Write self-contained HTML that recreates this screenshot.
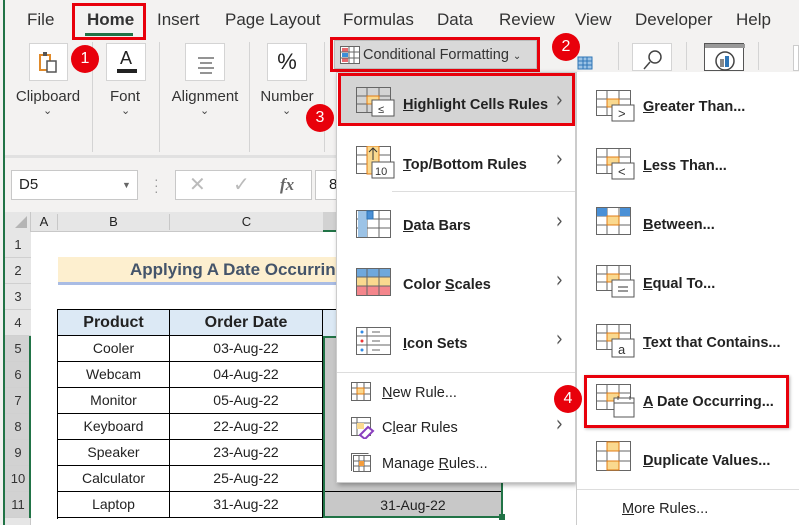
<!DOCTYPE html>
<html><head><meta charset="utf-8"><style>
*{margin:0;padding:0;box-sizing:border-box}
body{width:799px;height:525px;overflow:hidden;position:relative;background:#f3f2f1;font-family:"Liberation Sans",Arial,sans-serif;color:#222}
.a{position:absolute}
.tab{position:absolute;top:10px;font-size:17px;color:#333}
.rb{position:absolute;border:1px solid #d4d4d4;background:#fff}
.lbl{position:absolute;top:88px;font-size:15px;color:#333;text-align:center}
.chev{position:absolute;top:104px;font-size:11px;color:#444}
.sep{position:absolute;top:42px;width:1px;height:110px;background:#d4d4d4}
.circ{position:absolute;width:28px;height:28px;border-radius:50%;background:#e8000b;color:#fff;font-size:16px;text-align:center;line-height:28px}
.rh{position:absolute;left:0;width:31px;height:26px;font-size:13px;color:#333;text-align:center;line-height:26px;border-bottom:1px solid #d0d0d0;background:#e6e6e6}
.cell{position:absolute;border-right:1px solid #000;border-bottom:1px solid #000;text-align:center;font-size:14px;line-height:25px;height:26px}
.m{position:absolute;font-size:14.5px;color:#222}
.mb{font-weight:bold}
.arr{position:absolute;font-size:22px;color:#555;font-family:"DejaVu Sans",sans-serif;transform:scaleX(.8)}
u{text-decoration:underline}
</style></head><body>
<div class="a" style="left:3px;top:0;width:2px;height:525px;background:#217346"></div>
<div class="tab" style="left:27px">File</div>
<div class="tab" style="left:87px;font-weight:bold">Home</div>
<div class="a" style="left:85px;top:33px;width:48px;height:3px;background:#217346"></div>
<div class="a" style="left:72px;top:3px;width:74px;height:37px;border:3px solid #e8000b"></div>
<div class="tab" style="left:157px">Insert</div>
<div class="tab" style="left:225px">Page Layout</div>
<div class="tab" style="left:343px">Formulas</div>
<div class="tab" style="left:437px">Data</div>
<div class="tab" style="left:499px">Review</div>
<div class="tab" style="left:575px">View</div>
<div class="tab" style="left:635px">Developer</div>
<div class="tab" style="left:736px">Help</div>
<div class="rb" style="left:29px;top:43px;width:39px;height:38px"><svg width="39" height="38"><rect x="10" y="11" width="10" height="15" fill="none" stroke="#e08a2a" stroke-width="2"/><rect x="17" y="17" width="9" height="11" fill="#fff" stroke="#555" stroke-width="1.5"/><rect x="13" y="8" width="4" height="4" fill="#555"/></svg></div>
<div class="rb" style="left:106px;top:43px;width:40px;height:38px;text-align:center;font-size:18px;line-height:28px">A<div class="a" style="left:10px;top:25px;width:20px;height:4px;background:#222"></div></div>
<div class="rb" style="left:185px;top:43px;width:40px;height:38px"><svg width="40" height="38"><path d="M12 14h16M14 19h12M12 24h16M14 29h12" stroke="#555" stroke-width="1.3"/></svg></div>
<div class="rb" style="left:267px;top:43px;width:40px;height:38px;text-align:center;font-size:22px;line-height:36px">%</div>
<div class="lbl" style="left:10px;width:76px">Clipboard</div>
<div class="lbl" style="left:100px;width:50px">Font</div>
<div class="lbl" style="left:168px;width:74px">Alignment</div>
<div class="lbl" style="left:258px;width:58px">Number</div>
<div class="chev" style="left:43px">&#8964;</div><div class="chev" style="left:121px">&#8964;</div><div class="chev" style="left:200px">&#8964;</div><div class="chev" style="left:282px">&#8964;</div>
<div class="sep" style="left:92px"></div><div class="sep" style="left:159px"></div><div class="sep" style="left:249px"></div><div class="sep" style="left:324px"></div>
<div class="rb" style="left:576px;top:43px;width:22px;height:28px;border:none;background:none"><svg width="22" height="28"><rect x="2" y="14" width="14" height="12" fill="#9cc3e6" stroke="#2e75b6"/><path d="M2 18h14M2 22h14M7 14v12M11 14v12" stroke="#2e75b6"/></svg></div>
<div class="sep" style="left:618px;height:28px"></div>
<div class="rb" style="left:632px;top:43px;width:40px;height:28px"><svg width="40" height="28"><circle cx="22" cy="13" r="6" fill="none" stroke="#444" stroke-width="1.5"/><path d="M17 18l-6 7" stroke="#444" stroke-width="1.5"/></svg></div>
<div class="sep" style="left:686px;height:28px"></div>
<div class="rb" style="left:704px;top:43px;width:40px;height:28px;border-color:#555"><svg width="40" height="28"><rect x="0" y="0" width="40" height="4" fill="#999"/><circle cx="20" cy="17" r="9" fill="none" stroke="#444" stroke-width="1.5"/><rect x="15" y="15" width="4" height="8" fill="#888"/><rect x="20" y="12" width="4" height="11" fill="#2e75b6"/></svg></div>
<div class="sep" style="left:758px;height:28px"></div>
<div class="a" style="left:793px;top:45px;width:6px;height:26px;border:1px solid #ccc;background:#fff"></div>
<div class="a" style="left:5px;top:155px;width:794px;height:3px;background:#e1e1e1"></div>
<div class="a" style="left:11px;top:170px;width:127px;height:30px;background:#fff;border:1px solid #c8c8c8;font-size:15px;line-height:28px;padding-left:7px">D5<span class="a" style="left:110px;top:0;font-size:9px;color:#666">&#9660;</span></div>
<div class="a" style="left:154px;top:176px;color:#999;font-size:14px;line-height:6px">·<br>·<br>·</div>
<div class="a" style="left:175px;top:170px;width:137px;height:30px;background:#fff;border:1px solid #c8c8c8;font-size:20px;color:#bbb;line-height:28px"><span class="a" style="left:13px">✕</span><span class="a" style="left:57px">✓</span><span class="a" style="left:104px;font-family:'Liberation Serif';font-style:italic;font-weight:bold;color:#666;font-size:17px">fx</span></div>
<div class="a" style="left:315px;top:170px;width:30px;height:30px;background:#fff;border:1px solid #c8c8c8;font-size:15px;line-height:28px;padding-left:13px">8</div>
<div class="a" style="left:5px;top:212px;width:794px;height:313px;background:#fff"></div>
<div class="a" style="left:5px;top:212px;width:794px;height:20px;background:#e6e6e6;border-bottom:1px solid #c8c8c8"></div>
<div class="a" style="left:5px;top:212px;width:26px;height:313px;background:#e6e6e6;border-right:1px solid #c8c8c8"></div>
<svg class="a" style="left:14px;top:215px" width="14" height="14"><path d="M13 1V13H1z" fill="#b5b5b5"/></svg>
<div class="a" style="left:31px;top:214px;width:27px;text-align:center;font-size:13px;border-right:1px solid #c8c8c8;height:16px">A</div>
<div class="a" style="left:58px;top:214px;width:112px;text-align:center;font-size:13px;border-right:1px solid #c8c8c8;height:16px">B</div>
<div class="a" style="left:170px;top:214px;width:153px;text-align:center;font-size:13px;height:16px">C</div>
<div class="a" style="left:323px;top:212px;width:20px;height:20px;background:#d2d2d2;border-bottom:2px solid #217346"></div>
<div class="rh" style="top:232px;left:5px;width:26px">1</div>
<div class="rh" style="top:258px;left:5px;width:26px">2</div>
<div class="rh" style="top:284px;left:5px;width:26px">3</div>
<div class="rh" style="top:310px;left:5px;width:26px">4</div>
<div class="rh" style="top:336px;left:5px;width:26px;background:#d2d2d2">5</div>
<div class="rh" style="top:362px;left:5px;width:26px;background:#d2d2d2">6</div>
<div class="rh" style="top:388px;left:5px;width:26px;background:#d2d2d2">7</div>
<div class="rh" style="top:414px;left:5px;width:26px;background:#d2d2d2">8</div>
<div class="rh" style="top:440px;left:5px;width:26px;background:#d2d2d2">9</div>
<div class="rh" style="top:466px;left:5px;width:26px;background:#d2d2d2">10</div>
<div class="rh" style="top:492px;left:5px;width:26px;background:#d2d2d2">11</div>
<div class="a" style="left:29px;top:336px;width:2px;height:182px;background:#217346"></div>
<div class="a" style="left:58px;top:257px;width:290px;height:25px;background:#fdefcf;font-weight:bold;font-size:17px;color:#44546a;line-height:25px;padding-left:72px;white-space:nowrap;overflow:hidden">Applying A Date Occurring</div>
<div class="a" style="left:58px;top:282px;width:290px;height:3px;background:#a9bce4"></div>
<div class="a" style="left:57px;top:309px;width:1px;height:210px;background:#000"></div>
<div class="a" style="left:57px;top:309px;width:280px;height:1px;background:#000"></div>
<div class="cell" style="left:58px;top:310px;width:112px;background:#dce9f5;font-weight:bold;font-size:16px">Product</div>
<div class="cell" style="left:170px;top:310px;width:153px;background:#dce9f5;font-weight:bold;font-size:16px">Order Date</div>
<div class="a" style="left:323px;top:310px;width:14px;height:26px;background:#dce9f5"></div>
<div class="a" style="left:323px;top:336px;width:180px;height:182px;background:#c8c8c8;border:2px solid #217346"></div>
<div class="a" style="left:499px;top:514px;width:6px;height:6px;background:#217346"></div>
<div class="cell" style="left:58px;top:336px;width:112px">Cooler</div><div class="cell" style="left:170px;top:336px;width:153px">03-Aug-22</div>
<div class="cell" style="left:58px;top:362px;width:112px">Webcam</div><div class="cell" style="left:170px;top:362px;width:153px">04-Aug-22</div>
<div class="cell" style="left:58px;top:388px;width:112px">Monitor</div><div class="cell" style="left:170px;top:388px;width:153px">05-Aug-22</div>
<div class="cell" style="left:58px;top:414px;width:112px">Keyboard</div><div class="cell" style="left:170px;top:414px;width:153px">22-Aug-22</div>
<div class="cell" style="left:58px;top:440px;width:112px">Speaker</div><div class="cell" style="left:170px;top:440px;width:153px">23-Aug-22</div>
<div class="cell" style="left:58px;top:466px;width:112px">Calculator</div><div class="cell" style="left:170px;top:466px;width:153px">25-Aug-22</div>
<div class="cell" style="left:58px;top:492px;width:112px">Laptop</div><div class="cell" style="left:170px;top:492px;width:153px">31-Aug-22</div>
<div class="a" style="left:325px;top:491px;width:176px;height:1px;background:#000"></div>
<div class="a" style="left:325px;top:493px;width:176px;text-align:center;font-size:14px;line-height:25px">31-Aug-22</div>
<div class="a" style="left:334px;top:40px;width:203px;height:29px;background:#d9d9d9;border:1px solid #bbb"></div>
<svg class="a" style="left:340px;top:46px" width="20" height="18"><rect x="0.5" y="0.5" width="19" height="17" fill="#fff" stroke="#666"/><rect x="2" y="2" width="6" height="4" fill="#e8696e"/><rect x="2" y="7" width="6" height="4" fill="#3b8ed8"/><rect x="2" y="12" width="6" height="4" fill="#e8696e"/><path d="M0 6h20M0 12h20M9 0v18M14 0v18" stroke="#666"/></svg>
<div class="a" style="left:363px;top:47px;font-size:14.5px;color:#333">Conditional Formatting <span style="font-size:10px">&#8964;</span></div>
<div class="a" style="left:330px;top:37px;width:210px;height:35px;border:3px solid #e8000b"></div>
<div class="a" style="left:336px;top:72px;width:240px;height:411px;background:#fff;box-shadow:2px 2px 5px rgba(0,0,0,.35);border:1px solid #ccc"></div>
<div class="a" style="left:338px;top:73px;width:237px;height:53px;background:#d4d4d4;border:3px solid #e8000b"></div>
<svg class="a" style="left:356px;top:87px" width="40" height="32"><g stroke="#666" fill="none"><rect x="0.5" y="0.5" width="34" height="25"/><path d="M0 9h35M0 17h35M11 0v26M23 0v26"/></g><rect x="11" y="9" width="12" height="8" fill="#fad98f" stroke="#e07b14"/><rect x="16" y="13" width="22" height="16" fill="#fff" stroke="#555"/><text x="22" y="26" font-size="11" fill="#333" font-family="Liberation Sans">≤</text></svg>
<div class="m mb" style="left:403px;top:97px"><u>H</u>ighlight Cells Rules</div><div class="arr" style="left:555px;top:88px">&#8250;</div>
<svg class="a" style="left:356px;top:146px" width="40" height="36"><g stroke="#666" fill="none"><rect x="0.5" y="0.5" width="34" height="27"/><path d="M0 9h35M0 18h35M11 0v28M23 0v28"/></g><rect x="11" y="0" width="12" height="28" fill="#fad98f" stroke="#e07b14"/><path d="M17 2v12M13 6l4-4 4 4" stroke="#333" fill="none"/><rect x="16" y="16" width="22" height="16" fill="#fff" stroke="#555"/><text x="19" y="29" font-size="11" fill="#333" font-family="Liberation Sans">10</text></svg>
<div class="m mb" style="left:403px;top:157px"><u>T</u>op/Bottom Rules</div><div class="arr" style="left:555px;top:147px">&#8250;</div>
<div class="a" style="left:392px;top:191px;width:183px;height:1px;background:#ddd"></div>
<svg class="a" style="left:356px;top:210px" width="40" height="30"><g stroke="#666" fill="none"><rect x="0.5" y="0.5" width="34" height="27"/><path d="M0 9h35M0 18h35M11 0v28M23 0v28"/></g><rect x="2" y="1" width="9" height="26" fill="#9cc3e6"/><rect x="11" y="1" width="6" height="8" fill="#4a90d6" stroke="#2e75b6"/></svg>
<div class="m mb" style="left:403px;top:218px"><u>D</u>ata Bars</div><div class="arr" style="left:555px;top:209px">&#8250;</div>
<svg class="a" style="left:356px;top:268px" width="40" height="30"><rect x="1" y="1" width="33" height="8" fill="#6fa8dc"/><rect x="1" y="9" width="33" height="9" fill="#fad98f"/><rect x="1" y="18" width="33" height="9" fill="#f4868c"/><g stroke="#666" fill="none"><rect x="0.5" y="0.5" width="34" height="27"/><path d="M0 9h35M0 18h35M11 0v28M23 0v28"/></g></svg>
<div class="m mb" style="left:403px;top:277px">Color <u>S</u>cales</div><div class="arr" style="left:555px;top:268px">&#8250;</div>
<svg class="a" style="left:356px;top:327px" width="40" height="30"><g stroke="#666" fill="none"><rect x="0.5" y="0.5" width="34" height="27"/><path d="M0 9h35M0 18h35M11 0v28"/></g><circle cx="6" cy="5" r="1.5" fill="#2e8ae6"/><circle cx="6" cy="14" r="1.5" fill="#e33"/><circle cx="6" cy="23" r="1.5" fill="#2e8ae6"/><path d="M16 5h8M16 14h8M16 23h8" stroke="#666"/></svg>
<div class="m mb" style="left:403px;top:336px"><u>I</u>con Sets</div><div class="arr" style="left:555px;top:327px">&#8250;</div>
<div class="a" style="left:337px;top:372px;width:238px;height:1px;background:#ddd"></div>
<svg class="a" style="left:351px;top:382px" width="22" height="20"><g stroke="#666" fill="none"><rect x="0.5" y="0.5" width="19" height="18"/><path d="M0 6h20M0 12h20M6 0v19M13 0v19"/></g><rect x="6" y="6" width="7" height="6" fill="#fad98f" stroke="#e07b14"/></svg>
<div class="m" style="left:382px;top:385px"><u>N</u>ew Rule...</div>
<svg class="a" style="left:351px;top:417px" width="24" height="22"><g stroke="#666" fill="none"><rect x="0.5" y="0.5" width="19" height="18"/><path d="M0 6h20M6 0v19"/></g><rect x="6" y="6" width="7" height="6" fill="#fad98f"/><path d="M9 18l8-8 5 4-8 8z" fill="#fff" stroke="#8a3fbf" stroke-width="2"/></svg>
<div class="m" style="left:382px;top:420px">C<u>l</u>ear Rules</div><div class="arr" style="left:555px;top:412px">&#8250;</div>
<svg class="a" style="left:351px;top:453px" width="22" height="20"><g stroke="#666" fill="none"><rect x="2.5" y="2.5" width="17" height="16"/><path d="M0.5 18V0.5h17M2 8h18M2 13h18M8 2v17M13 2v17"/></g><rect x="8" y="8" width="5" height="5" fill="#f39c3c"/></svg>
<div class="m" style="left:382px;top:456px">Manage <u>R</u>ules...</div>
<div class="a" style="left:576px;top:72px;width:223px;height:453px;background:#fff;border-left:1px solid #ccc"></div>
<svg class="a" style="left:596px;top:90px" width="40" height="34"><g stroke="#666" fill="none"><rect x="0.5" y="0.5" width="34" height="25"/><path d="M0 9h35M0 17h35M11 0v26M23 0v26"/></g><rect x="11" y="9" width="12" height="8" fill="#fad98f" stroke="#e07b14"/><rect x="16" y="15" width="22" height="16" fill="#fff" stroke="#555"/><text x="22" y="28" font-size="13" fill="#333" font-family="Liberation Sans">&gt;</text></svg>
<div class="m mb" style="left:643px;top:99px"><u>G</u>reater Than...</div>
<svg class="a" style="left:596px;top:148px" width="40" height="34"><g stroke="#666" fill="none"><rect x="0.5" y="0.5" width="34" height="25"/><path d="M0 9h35M0 17h35M11 0v26M23 0v26"/></g><rect x="11" y="9" width="12" height="8" fill="#fad98f" stroke="#e07b14"/><rect x="16" y="15" width="22" height="16" fill="#fff" stroke="#555"/><text x="22" y="28" font-size="13" fill="#333" font-family="Liberation Sans">&lt;</text></svg>
<div class="m mb" style="left:643px;top:158px"><u>L</u>ess Than...</div>
<svg class="a" style="left:596px;top:207px" width="40" height="30"><g stroke="#666" fill="none"><rect x="0.5" y="0.5" width="34" height="27"/><path d="M0 9h35M0 18h35M11 0v28M23 0v28"/></g><rect x="1" y="1" width="10" height="8" fill="#4a90d6"/><rect x="24" y="1" width="10" height="8" fill="#4a90d6"/><rect x="11" y="9" width="12" height="9" fill="#fad98f" stroke="#e07b14"/></svg>
<div class="m mb" style="left:643px;top:217px"><u>B</u>etween...</div>
<svg class="a" style="left:596px;top:265px" width="40" height="34"><g stroke="#666" fill="none"><rect x="0.5" y="0.5" width="34" height="25"/><path d="M0 9h35M0 17h35M11 0v26M23 0v26"/></g><rect x="11" y="9" width="12" height="8" fill="#fad98f" stroke="#e07b14"/><rect x="16" y="15" width="22" height="17" fill="#fff" stroke="#555"/><path d="M22 22h10M22 26h10" stroke="#333"/></svg>
<div class="m mb" style="left:643px;top:276px"><u>E</u>qual To...</div>
<svg class="a" style="left:596px;top:324px" width="40" height="36"><g stroke="#666" fill="none"><rect x="0.5" y="0.5" width="34" height="25"/><path d="M0 9h35M0 17h35M11 0v26M23 0v26"/></g><rect x="11" y="9" width="12" height="8" fill="#fad98f" stroke="#e07b14"/><rect x="16" y="15" width="22" height="18" fill="#fff" stroke="#555"/><text x="22" y="30" font-size="13" fill="#333" font-family="Liberation Sans">a</text></svg>
<div class="m mb" style="left:643px;top:335px"><u>T</u>ext that Contains...</div>
<div class="a" style="left:584px;top:375px;width:205px;height:53px;border:3px solid #e8000b;box-shadow:1px 1px 3px rgba(0,0,0,.3)"></div>
<svg class="a" style="left:596px;top:384px" width="40" height="36"><g stroke="#666" fill="none"><rect x="0.5" y="0.5" width="34" height="25"/><path d="M0 9h35M0 17h35M11 0v26M23 0v26"/></g><rect x="11" y="9" width="12" height="8" fill="#fad98f" stroke="#e07b14"/><rect x="18" y="14" width="20" height="19" fill="#fff" stroke="#555"/><path d="M18 19h20M22 12v4M34 12v4" stroke="#555"/></svg>
<div class="m mb" style="left:643px;top:394px"><u>A</u> Date Occurring...</div>
<svg class="a" style="left:596px;top:441px" width="40" height="32"><g stroke="#666" fill="none"><rect x="0.5" y="0.5" width="34" height="29"/><path d="M0 10h35M0 20h35M11 0v30M23 0v30"/></g><rect x="11" y="1" width="12" height="9" fill="#fad98f" stroke="#e07b14"/><rect x="11" y="20" width="12" height="9" fill="#fad98f" stroke="#e07b14"/></svg>
<div class="m mb" style="left:643px;top:453px"><u>D</u>uplicate Values...</div>
<div class="a" style="left:577px;top:489px;width:222px;height:1px;background:#ddd"></div>
<div class="m" style="left:622px;top:501px"><u>M</u>ore Rules...</div>
<div class="circ" style="left:71px;top:45px">1</div>
<div class="circ" style="left:552px;top:33px">2</div>
<div class="circ" style="left:306px;top:104px">3</div>
<div class="circ" style="left:554px;top:385px">4</div>
</body></html>
